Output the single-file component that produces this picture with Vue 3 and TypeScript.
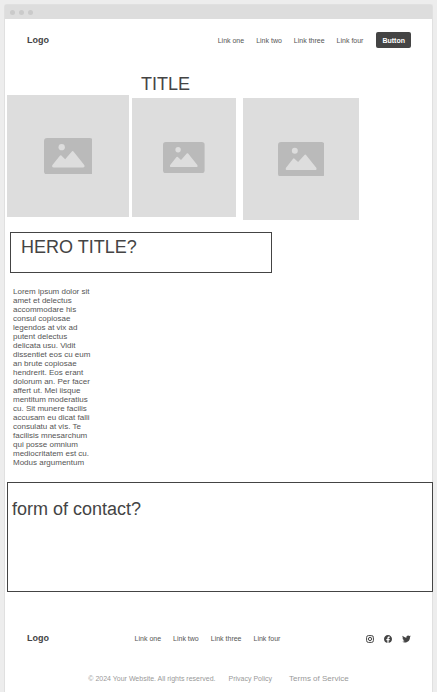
<script setup lang="ts">
interface Picture {
  id: string
  label: string
}

const links: string[] = ['Link one', 'Link two', 'Link three', 'Link four']

const pictures: Picture[] = [
  { id: 'first', label: 'First picture' },
  { id: 'second', label: 'Second picture' },
  { id: 'third', label: 'Third picture' },
]

const intro: string[] = [
  'Lorem ipsum dolor sit',
  'amet et delectus',
  'accommodare his',
  'consul copiosae',
  'legendos at vix ad',
  'putent delectus',
  'delicata usu. Vidit',
  'dissentiet eos cu eum',
  'an brute copiosae',
  'hendrerit. Eos erant',
  'dolorum an. Per facer',
  'affert ut. Mei iisque',
  'mentitum moderatius',
  'cu. Sit munere facilis',
  'accusam eu dicat falli',
  'consulatu at vis. Te',
  'facilisis mnesarchum',
  'qui posse omnium',
  'mediocritatem est cu.',
  'Modus argumentum',
]
</script>

<template>
  <div class="frame">
    <div class="chrome" aria-hidden="true">
      <span class="dot"></span>
      <span class="dot"></span>
      <span class="dot"></span>
    </div>

    <header class="bar">
      <a class="logo" href="#">Logo</a>
      <div class="actions">
        <nav class="links" aria-label="Main">
          <a v-for="link in links" :key="link" href="#">{{ link }}</a>
        </nav>
        <button class="button" type="button">Button</button>
      </div>
    </header>

    <main>
      <h1 class="heading title">TITLE</h1>

      <div class="gallery">
        <div v-for="p in pictures" :key="p.id" class="picture" :class="p.id" role="img" :aria-label="p.label">
          <svg class="placeholder" viewBox="0 0 48 36">
            <rect width="48" height="36" rx="3.2" fill="#bababa" />
            <circle cx="17.4" cy="9" r="3.1" fill="#ddd" />
            <path
              d="M8.3 26.6 15.6 17.4Q16.3 16.5 17.1 17.3L20.8 20.8 27.4 13.4Q28.2 12.4 29 13.4L39.6 26.6Q40.6 29 38.4 29H9.6Q7.2 29 8.3 26.6Z"
              fill="#ddd"
            />
          </svg>
        </div>
      </div>

      <section class="hero">
        <h2 class="heading">HERO TITLE?</h2>
      </section>

      <p class="intro">{{ intro.join('\n') }}</p>

      <section class="contact">
        <h2 class="heading">form of contact?</h2>
      </section>
    </main>

    <footer>
      <div class="bar foot">
        <a class="logo" href="#">Logo</a>
        <nav class="links" aria-label="Footer">
          <a v-for="link in links" :key="link" href="#">{{ link }}</a>
        </nav>
        <div class="social">
          <a href="#" aria-label="Instagram">
            <svg viewBox="0 0 24 24" fill="none" stroke="#444" stroke-width="3">
              <rect x="1.8" y="1.8" width="20.4" height="20.4" rx="5.5" />
              <circle cx="12" cy="12" r="4.8" />
              <circle cx="18" cy="6" r="1.4" fill="#444" stroke="none" />
            </svg>
          </a>
          <a href="#" aria-label="Facebook">
            <svg viewBox="0 0 24 24" fill="#444">
              <path
                d="M24 12.07C24 5.4 18.63 0 12 0S0 5.4 0 12.07c0 6.03 4.39 11.02 10.13 11.93v-8.44H7.08v-3.49h3.05V9.41c0-3.02 1.79-4.69 4.53-4.69 1.31 0 2.69.24 2.69.24v2.97h-1.52c-1.49 0-1.96.93-1.96 1.89v2.25h3.33l-.53 3.49h-2.8V24C19.61 23.09 24 18.1 24 12.07z"
              />
            </svg>
          </a>
          <a href="#" aria-label="Twitter">
            <svg class="wide" viewBox="0 1 24 22" fill="#444">
              <path
                d="M23.95 4.57a10 10 0 0 1-2.82.77 4.96 4.96 0 0 0 2.16-2.72c-.95.56-2 .96-3.13 1.18a4.92 4.92 0 0 0-8.38 4.48C7.69 8.1 4.07 6.13 1.64 3.16a4.93 4.93 0 0 0 1.52 6.57 4.9 4.9 0 0 1-2.23-.61v.06a4.92 4.92 0 0 0 3.95 4.83 5 5 0 0 1-2.21.08 4.94 4.94 0 0 0 4.6 3.42A9.87 9.87 0 0 1 0 19.54a13.99 13.99 0 0 0 7.55 2.21c9.05 0 14-7.5 14-13.98 0-.21 0-.42-.02-.63a9.94 9.94 0 0 0 2.42-2.57z"
              />
            </svg>
          </a>
        </div>
      </div>

      <div class="legal">
        <span>© 2024 Your Website. All rights reserved.</span>
        <a href="#">Privacy Policy</a>
        <a class="terms" href="#">Terms of Service</a>
      </div>
    </footer>
  </div>
</template>

<style>
body {
  background: #ededed;
}
</style>

<style scoped>
.frame {
  box-sizing: border-box;
  min-height: calc(100vh - 4px);
  margin: 4px 4px 0;
  border: 1px solid #e0e0e0;
  border-bottom: 0;
  border-radius: 3px 3px 0 0;
  background: #fff;
  color: #444;
  font-family: 'Liberation Sans', Arial, sans-serif;
  font-size: 7px;
  line-height: 9px;
}

a {
  color: inherit;
  text-decoration: none;
}

.chrome {
  display: flex;
  align-items: center;
  gap: 4px;
  height: 14px;
  padding-left: 5px;
  background: #ddd;
}

.dot {
  width: 5px;
  height: 5px;
  border-radius: 50%;
  background: #cacaca;
}

.bar {
  display: flex;
  align-items: center;
  justify-content: space-between;
  padding: 13px 21px 13px 22px;
}

.logo {
  font-size: 9px;
  font-weight: bold;
}

.actions {
  display: flex;
  align-items: center;
  gap: 13px;
}

.links {
  display: flex;
  align-items: center;
  gap: 12px;
  color: #555;
}

.button {
  height: 16px;
  padding: 0 6px;
  border: 0;
  border-radius: 2px;
  background: #444;
  color: #fff;
  font: inherit;
  font-weight: bold;
}

.heading {
  margin: 0;
  font-size: 18px;
  font-weight: normal;
  line-height: 21px;
}

.title {
  padding: 13px 0 0 136px;
}

.gallery {
  display: grid;
  grid-template-columns: 122fr 104fr 120fr 70fr;
  align-items: start;
  gap: 3px;
  padding-left: 2px;
}

.picture {
  display: flex;
  align-items: center;
  justify-content: center;
  background: #ddd;
}

.first {
  aspect-ratio: 1;
}

.second {
  aspect-ratio: 104 / 119;
  margin-top: 3px;
}

.third {
  aspect-ratio: 116 / 122;
  margin: 3px 0 0 4px;
}

.placeholder {
  width: 40%;
}

.hero {
  box-sizing: border-box;
  max-width: 262px;
  min-height: 41px;
  margin: 12px 5px 0;
  padding: 4px 10px;
  border: 1px solid #444;
}

.intro {
  margin: 14px 8px 0;
  color: #555;
  font-size: 8px;
  white-space: pre-line;
}

.contact {
  box-sizing: border-box;
  min-height: 110px;
  margin: 15px -1px 0 2px;
  padding: 16px 4px;
  border: 1px solid #444;
}

.foot {
  padding-top: 42px;
  padding-bottom: 0;
}

.social {
  display: flex;
  align-items: center;
  gap: 10px;
}

.social svg {
  display: block;
  width: 8px;
  height: 8px;
}

.social .wide {
  width: 9px;
}

.legal {
  display: flex;
  align-items: center;
  justify-content: center;
  gap: 13px;
  padding: 31px 0 8px;
  color: #999;
}

.terms {
  margin-left: 4px;
  font-size: 8px;
}
</style>
